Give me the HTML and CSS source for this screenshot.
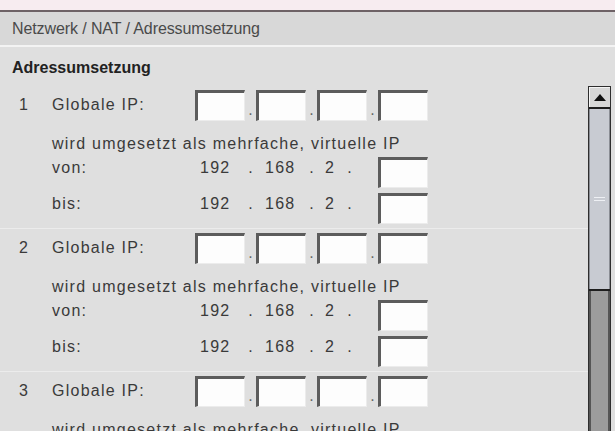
FILE: index.html
```html
<!DOCTYPE html>
<html lang="de">
<head>
<meta charset="utf-8">
<title>Adressumsetzung</title>
<link rel="stylesheet" href="styles.css">
</head>
<body>
<div class="top"></div>
<div class="crumb">Netzwerk / NAT / Adressumsetzung</div>
<div class="main">
  <div class="content">
    <div class="title">Adressumsetzung</div>

    <div class="entry">
      <div class="row ip">
        <span class="num">1</span><span class="lbl">Globale IP:</span>
        <span class="box"></span><span class="dot">.</span>
        <span class="box"></span><span class="dot">.</span>
        <span class="box"></span><span class="dot">.</span>
        <span class="box"></span>
      </div>
      <div class="wird">wird umgesetzt als mehrfache, virtuelle IP</div>
      <div class="row sub">
        <span></span><span class="lbl">von:</span>
        <span class="o1">192</span><span class="tdot">.</span>
        <span class="o2">168</span><span class="tdot">.</span>
        <span class="o3">2<span class="tdot3">.</span></span><span></span>
        <span class="box"></span>
      </div>
      <div class="row sub">
        <span></span><span class="lbl">bis:</span>
        <span class="o1">192</span><span class="tdot">.</span>
        <span class="o2">168</span><span class="tdot">.</span>
        <span class="o3">2<span class="tdot3">.</span></span><span></span>
        <span class="box"></span>
      </div>
    </div>

    <div class="entry">
      <div class="row ip">
        <span class="num">2</span><span class="lbl">Globale IP:</span>
        <span class="box"></span><span class="dot">.</span>
        <span class="box"></span><span class="dot">.</span>
        <span class="box"></span><span class="dot">.</span>
        <span class="box"></span>
      </div>
      <div class="wird">wird umgesetzt als mehrfache, virtuelle IP</div>
      <div class="row sub">
        <span></span><span class="lbl">von:</span>
        <span class="o1">192</span><span class="tdot">.</span>
        <span class="o2">168</span><span class="tdot">.</span>
        <span class="o3">2<span class="tdot3">.</span></span><span></span>
        <span class="box"></span>
      </div>
      <div class="row sub">
        <span></span><span class="lbl">bis:</span>
        <span class="o1">192</span><span class="tdot">.</span>
        <span class="o2">168</span><span class="tdot">.</span>
        <span class="o3">2<span class="tdot3">.</span></span><span></span>
        <span class="box"></span>
      </div>
    </div>

    <div class="entry">
      <div class="row ip">
        <span class="num">3</span><span class="lbl">Globale IP:</span>
        <span class="box"></span><span class="dot">.</span>
        <span class="box"></span><span class="dot">.</span>
        <span class="box"></span><span class="dot">.</span>
        <span class="box"></span>
      </div>
      <div class="wird">wird umgesetzt als mehrfache, virtuelle IP</div>
    </div>
  </div>

  <div class="sb">
    <div class="sb-up"><span class="arrow"></span></div>
    <div class="sb-thumb"><span class="grip"></span><span class="grip"></span></div>
    <div class="sb-track"></div>
  </div>
</div>
</body>
</html>
```
FILE: styles.css
```css
html, body {
  margin: 0;
  padding: 0;
}
body {
  width: 615px;
  height: 431px;
  overflow: hidden;
  background: #dfdfdf;
  font-family: "Liberation Sans", Arial, sans-serif;
  font-size: 16px;
  color: #3a3a3a;
}
.top {
  height: 10px;
  background: #f7ecf0;
  border-bottom: 2px solid #6e6266;
}
.crumb {
  height: 33px;
  line-height: 33px;
  padding-left: 12px;
  background: #d8d8d8;
  color: #4a4a4a;
  letter-spacing: -0.1px;
  border-bottom: 2px solid #f3f3f3;
}
.main {
  display: flex;
  align-items: flex-start;
  height: 384px;
}
.content {
  flex: 1;
  min-width: 0;
}
.title {
  padding: 11px 0 8px 12px;
  line-height: 20px;
  font-weight: bold;
  color: #222;
}
.entry {
  height: 143px;
  box-sizing: border-box;
  border-bottom: 1px solid #ececec;
  letter-spacing: 1.25px;
}
.row {
  display: grid;
  grid-template-columns: 33px 143px 50px 11px 50px 11px 50px 11px 50px;
  padding-left: 19px;
  line-height: 20px;
}
.ip {
  height: 38px;
  align-items: center;
}
.box {
  box-sizing: border-box;
  width: 50px;
  height: 31px;
  background: #fdfdfd;
  border-top: 3px solid #5c5c5c;
  border-left: 3px solid #5c5c5c;
  border-right: 1px solid #ececec;
  border-bottom: 1px solid #ececec;
}
.dot {
  align-self: end;
  text-align: center;
  padding-bottom: 4px;
  letter-spacing: 0;
  color: #666;
}
.wird {
  box-sizing: border-box;
  height: 32px;
  padding: 10px 0 0 52px;
  line-height: 20px;
}
.sub {
  box-sizing: border-box;
  height: 36px;
  padding-top: 2px;
  align-items: start;
}
.sub .box {
  margin-top: -1px;
}
.o1 { padding-left: 5px; }
.o2 { padding-left: 9px; }
.o3 { padding-left: 8px; }
.tdot {
  text-align: center;
  letter-spacing: 0;
}
.tdot3 {
  margin-left: 12px;
}
.sb {
  flex: none;
  width: 21px;
  height: 345px;
  margin: 39px 4px 0 0;
  border: 1px solid #2e2e2e;
  border-bottom: none;
  display: flex;
  flex-direction: column;
}
.sb-up {
  height: 20px;
  background: #d7d7d7;
  border-bottom: 2px solid #1e1e1e;
  box-shadow: inset 1px 1px 0 #f4f4f4;
  display: flex;
  align-items: center;
  justify-content: center;
}
.arrow {
  width: 0;
  height: 0;
  border-left: 6px solid transparent;
  border-right: 6px solid transparent;
  border-bottom: 7px solid #111;
}
.sb-thumb {
  height: 180px;
  background: #c8cbd2;
  border-bottom: 2px solid #1e1e1e;
  box-shadow: inset 1px 0 0 #8a8d94, inset -1px 0 0 #8a8d94;
  display: flex;
  flex-direction: column;
  align-items: center;
  justify-content: center;
  gap: 2px;
}
.grip {
  width: 11px;
  height: 1px;
  background: #eef0f4;
}
.sb-track {
  flex: 1;
  background: #9c9c9c;
  box-shadow: inset 2px 0 0 #555, inset -2px 0 0 #555;
}
```
